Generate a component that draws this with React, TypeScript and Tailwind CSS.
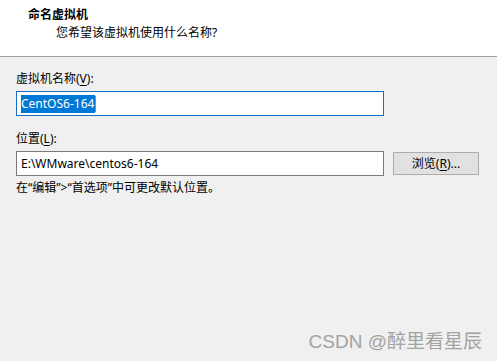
import React from 'react';

const font = "font-['Noto_Sans','Noto_Sans_CJK_SC',sans-serif]";

const Mnemonic: React.FC<{ ch: string }> = ({ ch }) => (
  <span className="underline underline-offset-2 decoration-1">{ch}</span>
);

const App: React.FC = () => {
  return (
    <div className={`relative w-[497px] h-[361px] bg-[#f0f0f0] text-[12px] text-black overflow-hidden ${font}`}>
      <div className="h-[57px] bg-white border-b border-[#a0a0a0] pt-[7px]">
        <div className="pl-[28px] leading-[16px] font-bold">命名虚拟机</div>
        <div className="pl-[56px] mt-[2px] leading-[16px]">您希望该虚拟机使用什么名称?</div>
      </div>

      <div className="pl-[16px] pt-[14px]">
        <div className="leading-[16px]">
          虚拟机名称(<Mnemonic ch="V" />):
        </div>
        <div className="mt-[4px] w-[368px] h-[25px] bg-white border border-[#1a6fc4] flex items-center pl-[4px]">
          <span className="bg-[#0078d7] text-white leading-[18px] pr-[1px]">CentOS6-164</span>
          <span className="w-px h-[16px] bg-[#e07a1f]" />
        </div>

        <div className="mt-[15px] leading-[16px]">
          位置(<Mnemonic ch="L" />):
        </div>
        <div className="mt-[4px] flex items-center gap-[9px]">
          <div className="w-[368px] h-[25px] bg-white border border-[#7a7a7a] flex items-center pl-[4px]">
            E:\WMware\centos6-164
          </div>
          <div className="w-[86px] h-[23px] bg-[#e1e1e1] border border-[#adadad] flex items-center justify-center">
            浏览(<Mnemonic ch="R" />)...
          </div>
        </div>

        <div className="mt-[4px] leading-[16px]">在“编辑”&gt;“首选项”中可更改默认位置。</div>
      </div>

      <div className="absolute right-[15px] bottom-[8px] text-[19px] leading-[22px] text-[#a3a3a3] font-['Liberation_Sans','Noto_Sans_CJK_SC',sans-serif]">
        CSDN @醉里看星辰
      </div>
    </div>
  );
};

export default App;
